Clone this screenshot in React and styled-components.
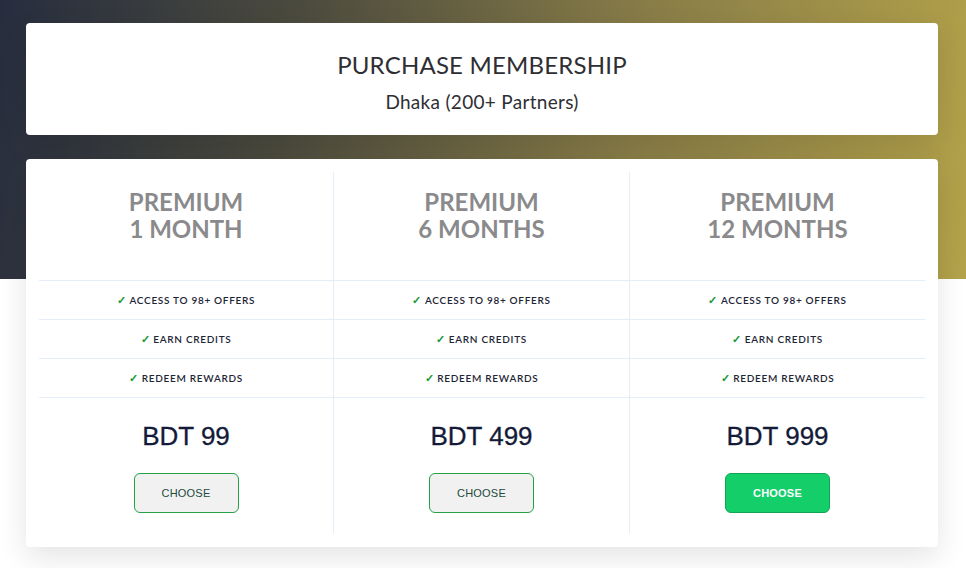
import React from "react";
import styled, { createGlobalStyle } from "styled-components";

const plans = [
  { id: 1, name: "1 MONTH", price: "BDT 99" },
  { id: 6, name: "6 MONTHS", price: "BDT 499" },
  { id: 12, name: "12 MONTHS", price: "BDT 999", active: true }
];

const features = ["ACCESS TO 98+ OFFERS", "EARN CREDITS", "REDEEM REWARDS"];

const GlobalStyle = createGlobalStyle`
  body {
    margin: 0;
    background: #ffffff;
    font-family: Lato, "Open Sans", sans-serif;
  }
  * {
    box-sizing: border-box;
  }
`;

const Page = styled.div`
  min-height: 568px;
  padding: 23px 28px 20px 26px;
  background:
    linear-gradient(100deg, #262d3e 0%, #4c4b3e 30%, #8a7e48 65%, #b4a34a 100%)
      top left / 100% 279px no-repeat,
    #ffffff;
`;

const Card = styled.div`
  background: #ffffff;
  border-radius: 4px;
  box-shadow: 0 10px 30px rgba(0, 0, 0, 0.11);
`;

const Header = styled(Card)`
  height: 112px;
  padding-top: 27px;
  text-align: center;
  color: #2e2e33;
  margin-bottom: 24px;

  h1 {
    margin: 0;
    font-size: 24px;
    line-height: 30px;
    font-weight: 400;
    letter-spacing: 0.2px;
  }
  p {
    margin: 10px 0 0;
    font-size: 19px;
    line-height: 24px;
    letter-spacing: 0.3px;
  }
`;

const Plans = styled(Card)`
  display: grid;
  grid-template-columns: 294px 296px 296px;
  padding: 13px 13px 14px;
`;

const Column = styled.div`
  display: flex;
  flex-direction: column;
  border-left: ${(p) => (p.$first ? "none" : "1px solid #e3eef8")};
`;

const Title = styled.h2`
  margin: 0;
  height: 108px;
  padding-top: 16px;
  text-align: center;
  font-size: 24px;
  line-height: 27px;
  font-weight: 700;
  color: #8a8a8c;
`;

const Feature = styled.div`
  height: 39px;
  display: flex;
  align-items: center;
  justify-content: center;
  gap: 3px;
  border-top: 1px solid #e3eef8;
  font-size: 10px;
  font-weight: 600;
  letter-spacing: 0.7px;
  color: #1e2636;

  span {
    color: #1c9a3a;
    font-size: 11px;
    font-weight: 700;
  }
`;

const Pricing = styled.div`
  border-top: 1px solid #e3eef8;
  padding: 23px 0 20px;
  display: flex;
  flex-direction: column;
  align-items: center;
`;

const Price = styled.div`
  font-family: "Liberation Sans", Arial, sans-serif;
  font-size: 26px;
  line-height: 30px;
  color: #141b38;
  margin-bottom: 22px;
  -webkit-text-stroke: 0.3px #141b38;
`;

const Choose = styled.button`
  width: 105px;
  height: 40px;
  border-radius: 6px;
  border: 1px solid ${(p) => (p.$active ? "#13a452" : "#24a145")};
  background: ${(p) => (p.$active ? "#14ce6a" : "#f1f1f1")};
  color: ${(p) => (p.$active ? "#ffffff" : "#1d4a3b")};
  font-family: "Liberation Sans", Arial, sans-serif;
  font-size: 11px;
  font-weight: ${(p) => (p.$active ? 700 : 400)};
  letter-spacing: 0.2px;
  cursor: pointer;
`;

export default function App() {
  return (
    <>
      <GlobalStyle />
      <Page>
        <Header>
          <h1>PURCHASE MEMBERSHIP</h1>
          <p>Dhaka (200+ Partners)</p>
        </Header>
        <Plans>
          {plans.map((plan, i) => (
            <Column key={plan.id} $first={i === 0}>
              <Title>
                PREMIUM
                <br />
                {plan.name}
              </Title>
              {features.map((f) => (
                <Feature key={f}>
                  <span>✓</span>
                  {f}
                </Feature>
              ))}
              <Pricing>
                <Price>{plan.price}</Price>
                <Choose $active={plan.active}>CHOOSE</Choose>
              </Pricing>
            </Column>
          ))}
        </Plans>
      </Page>
    </>
  );
}
